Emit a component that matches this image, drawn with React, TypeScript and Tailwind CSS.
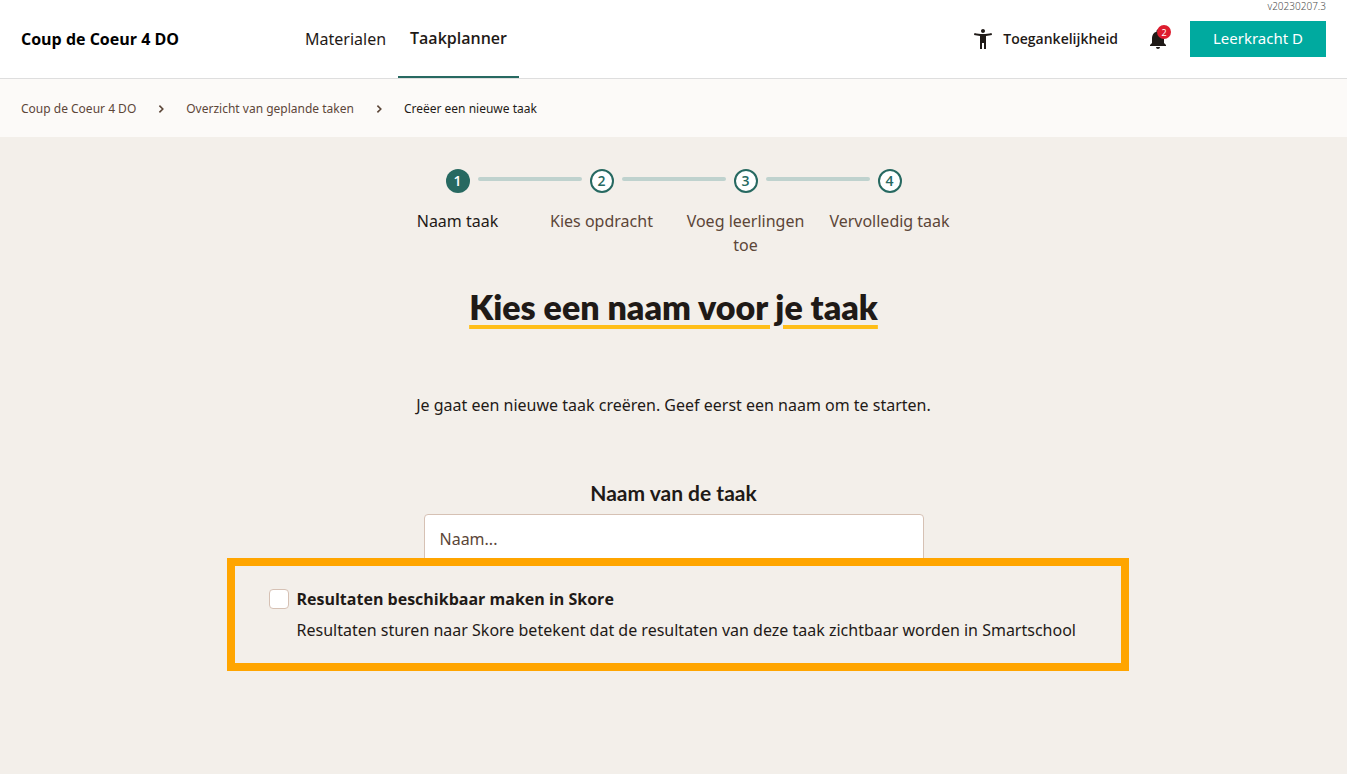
import { MdAccessibilityNew, MdNotifications } from "react-icons/md";

const steps = ["Naam taak", "Kies opdracht", "Voeg leerlingen toe", "Vervolledig taak"];

function Separator() {
  return (
    <svg viewBox="0 0 8 12" className="h-3 w-2 shrink-0" fill="none" stroke="#5c4638" strokeWidth="1.6" aria-hidden="true">
      <path d="M2.4 2.6 5.8 6 2.4 9.4" />
    </svg>
  );
}

function Header() {
  return (
    <header className="relative flex h-[79px] items-stretch justify-between border-b border-[#dedede] bg-white px-[21px]">
      <div className="flex items-stretch">
        <div className="flex w-[272px] items-center font-['Open_Sans',sans-serif] font-bold text-black">
          Coup de Coeur 4 DO
        </div>
        <nav className="flex items-stretch">
          <a href="#materialen" className="flex items-center px-3">
            Materialen
          </a>
          <a
            href="#taakplanner"
            className="flex items-center border-b-2 border-[#276961] px-3 font-['Open_Sans',sans-serif] font-semibold"
          >
            Taakplanner
          </a>
        </nav>
      </div>
      <div className="flex items-center">
        <button className="flex items-center gap-2 font-['Open_Sans',sans-serif] text-sm font-semibold">
          <MdAccessibilityNew size={24} />
          Toegankelijkheid
        </button>
        <button aria-label="Meldingen" className="relative ml-7 mr-5">
          <MdNotifications size={24} />
          <span className="absolute -top-0.5 left-[11px] flex size-[14px] items-center justify-center rounded-full bg-[#dd1c2e] text-[9px] leading-none text-white">
            2
          </span>
        </button>
        <button className="h-9 w-[136px] bg-[#00aa9f] pb-0.5 text-[15px] text-white">
          Leerkracht D
        </button>
      </div>
      <span className="absolute right-[21px] top-0 text-[10px] leading-3 font-light text-[#4f4f4f]">v20230207.3</span>
    </header>
  );
}

function Stepper() {
  return (
    <ol className="flex w-full max-w-[576px]">
      {steps.map((label, i) => (
        <li key={label} className="flex flex-1 flex-col items-center">
          <div className="flex w-full items-start gap-2">
            <span className={i > 0 ? "mt-2 h-1 flex-1 rounded-r-full bg-[#bfd2ce]" : "flex-1"} />
            <span
              className={
                i === 0
                  ? "flex size-6 items-center justify-center rounded-full bg-[#276961] font-['Open_Sans',sans-serif] text-sm font-semibold text-white"
                  : "flex size-6 items-center justify-center rounded-full border-2 border-[#276961] bg-white font-['Open_Sans',sans-serif] text-sm font-semibold text-[#276961]"
              }
            >
              {i + 1}
            </span>
            <span className={i < steps.length - 1 ? "mt-2 h-1 flex-1 rounded-l-full bg-[#bfd2ce]" : "flex-1"} />
          </div>
          <span className={i === 0 ? "mt-4 px-2 text-center text-[#1f1a17]" : "mt-4 px-2 text-center text-[#5c4638]"}>
            {label}
          </span>
        </li>
      ))}
    </ol>
  );
}

export default function App() {
  return (
    <div className="min-h-screen bg-[#f3efea] font-['Noto_Sans',sans-serif] text-base text-[#1f1a17]">
      <Header />
      <nav aria-label="Kruimelpad" className="flex h-[58px] items-center gap-[21px] bg-[#fcfaf8] px-[21px] pt-0.5 text-xs text-[#5c4638]">
        <a href="#start">Coup de Coeur 4 DO</a>
        <Separator />
        <a href="#overzicht">Overzicht van geplande taken</a>
        <Separator />
        <span className="text-[#1f1a17]">Creëer een nieuwe taak</span>
      </nav>
      <main className="flex flex-col items-center pt-8">
        <Stepper />
        <h1 className="mt-[26px] font-['Lato',sans-serif] text-[34px] leading-[48px] font-extrabold underline decoration-[#ffbe18] decoration-4 underline-offset-[5px]">
          Kies een naam voor je taak
        </h1>
        <p className="mt-[62px]">Je gaat een nieuwe taak creëren. Geef eerst een naam om te starten.</p>
        <label htmlFor="naam" className="mt-[62px] font-['Lato',sans-serif] text-[21px] leading-7 font-bold">
          Naam van de taak
        </label>
        <input
          id="naam"
          type="text"
          placeholder="Naam..."
          className="mt-[7px] h-[50px] w-full max-w-[500px] rounded border border-[#d6c1b4] bg-white px-[15px] placeholder:text-[#5c4638]"
        />
        <div className="relative -mt-1.5 ml-2 flex w-full max-w-[902px] items-start gap-2 border-8 border-[#ffa500] bg-[#f3efea] py-[21px] pl-[34px]">
          <input
            id="skore"
            type="checkbox"
            className="mt-0.5 size-5 shrink-0 appearance-none rounded border border-[#d6c1b4] bg-white checked:bg-[#276961]"
          />
          <div className="flex flex-col gap-[7px]">
            <label htmlFor="skore" className="font-['Open_Sans',sans-serif] font-bold">
              Resultaten beschikbaar maken in Skore
            </label>
            <p>Resultaten sturen naar Skore betekent dat de resultaten van deze taak zichtbaar worden in Smartschool</p>
          </div>
        </div>
      </main>
    </div>
  );
}
